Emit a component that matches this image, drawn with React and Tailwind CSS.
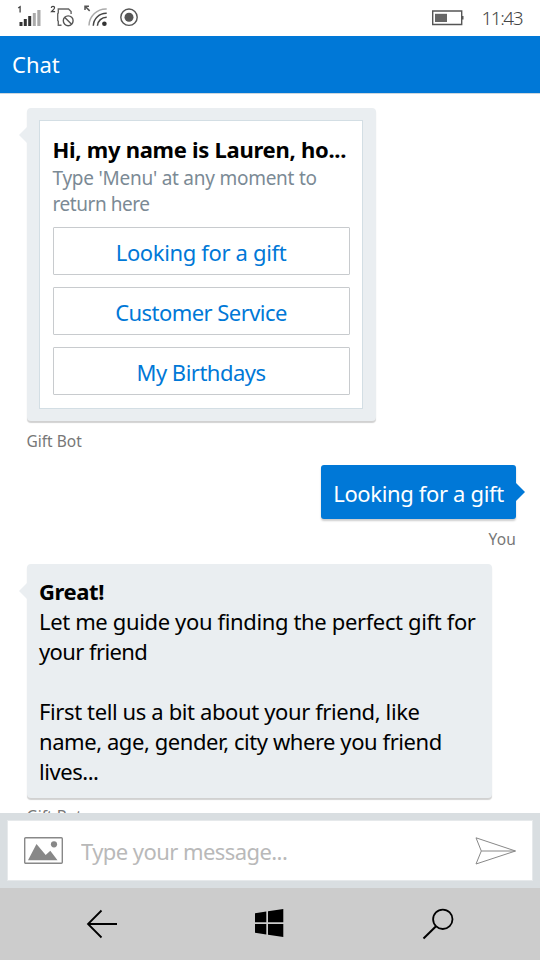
import React, { useState } from "react";

const menuOptions = [
  { label: "Looking for a gift", tracking: "tracking-[-0.35px]" },
  { label: "Customer Service", tracking: "tracking-[-0.55px]" },
  { label: "My Birthdays", tracking: "tracking-[-0.5px]" },
];

const guideLines = [
  { text: "Let me guide you finding the perfect gift for", tracking: "tracking-[-0.36px]" },
  { text: "your friend", tracking: "tracking-[-0.6px]" },
  { text: "", tracking: "" },
  { text: "First tell us a bit about your friend, like", tracking: "tracking-[-0.38px]" },
  { text: "name, age, gender, city where you friend", tracking: "tracking-[-0.43px]" },
  { text: "lives...", tracking: "tracking-[-0.45px]" },
];

function StatusBar() {
  return (
    <div className="flex h-9 shrink-0 items-start justify-between bg-white pr-[18px]">
      <svg width="150" height="36" viewBox="0 0 150 36" fill="none">
        {/* SIM 1 signal */}
        <path d="M18.2 8 20.1 6.7V12.4" stroke="#444" strokeWidth="1.3" />
        <path d="M19.5 22h3v4h-3zM23.8 19h3v7h-3zM28.2 16h3v10h-3z" fill="#333" />
        <path d="M32.8 13h3v13h-3zM37.3 10h3.2v16h-3.2z" fill="#aaa" />
        {/* SIM 2 missing */}
        <path d="M51.3 7.9c.2-2.2 3.5-2 3.2.1-.2 1.4-2 2.5-3 3.7h3.6" stroke="#444" strokeWidth="1.2" />
        <path d="M61.5 25.3h-3.2v-4l-.6-.8v-6.8l.6-.8V9h10.2l2.6 2.6V14" stroke="#666" strokeWidth="1.4" />
        <circle cx="68.2" cy="20.8" r="4.9" stroke="#555" strokeWidth="1.4" />
        <path d="m64.8 17.4 6.8 6.8" stroke="#555" strokeWidth="1.4" />
        {/* Wi-Fi */}
        <path d="M85 10V6.2h4M85.3 6.5l4.4 4.4" stroke="#555" strokeWidth="1.5" />
        <path d="M89 25.5A17 17 0 0 1 106.7 9" stroke="#aaa" strokeWidth="1.5" />
        <path d="M93.3 25.8A13 13 0 0 1 106.7 13.2" stroke="#444" strokeWidth="1.5" />
        <path d="M97.4 25.8a9.2 9.2 0 0 1 9.3-8.6" stroke="#444" strokeWidth="1.5" />
        <circle cx="104.4" cy="23.8" r="2.3" fill="#333" />
        {/* Location */}
        <circle cx="129" cy="17.2" r="8.2" stroke="#555" strokeWidth="1.4" />
        <circle cx="129" cy="17.2" r="4.5" fill="#555" />
      </svg>
      <div className="flex h-9 items-center gap-[17px]">
        <svg width="32" height="16" viewBox="0 0 32 16" fill="none">
          <path d="M.7 1h29v13.5H.7z" stroke="#555" strokeWidth="1.4" />
          <path d="M3 3.8h12V12H3z" fill="#666" />
          <path d="M30 6h1.5v3.5H30z" fill="#555" />
        </svg>
        <span className="text-[19px] leading-9 font-light tracking-[-1.5px] text-[#444]">11:43</span>
      </div>
    </div>
  );
}

function BotBubble({ className, children }) {
  return (
    <div className={`relative rounded bg-[#eaeef1] shadow-[0_2px_1px_rgba(0,0,0,0.18)] ${className}`}>
      {/* Tail */}
      <svg className="absolute top-[19px] -left-2" width="8" height="16" viewBox="0 0 8 16">
        <path d="M8 0 0 8l8 8z" fill="#eaeef1" />
      </svg>
      {children}
    </div>
  );
}

function MenuCard({ onSelect }) {
  return (
    <div className="flex h-[289px] flex-col border-[1.5px] border-[#d3dee4] bg-white px-[12.5px] pt-[13px]">
      <h2 className="text-[22px] leading-[30px] font-bold tracking-[-0.28px] whitespace-nowrap text-black">
        Hi, my name is Lauren, ho...
      </h2>
      <p className="mt-px text-[19px] leading-[26px] tracking-[-0.25px] whitespace-nowrap text-[#7b8a95]">
        Type 'Menu' at any moment to
        <br />
        <span className="tracking-[-0.45px]">return here</span>
      </p>
      <div className="mt-[10px] flex flex-col gap-3">
        {menuOptions.map((o) => (
          <button
            key={o.label}
            onClick={() => onSelect(o.label)}
            className={`h-12 rounded-[1px] border-[1.5px] border-[#c8cbce] pt-0.5 text-[22px] leading-[30px] text-[#0078d7] ${o.tracking}`}
          >
            {o.label}
          </button>
        ))}
      </div>
    </div>
  );
}

function MessageInput() {
  const [text, setText] = useState("");

  return (
    <div className="h-[75px] shrink-0 bg-[#d9dee1] px-[7px] pt-[7px] pb-[7px]">
      <div className="flex h-[61px] items-center border border-[#e6e9eb] bg-white pr-[15px] pl-4">
        <svg className="shrink-0" width="39" height="27" viewBox="0 0 39 27">
          <rect x=".7" y=".7" width="37.6" height="25.6" rx="1" fill="none" stroke="#888" strokeWidth="1.4" />
          <path d="M4 23.3 12.5 7l9.2 11 4.6-4.3 7.2 9.6z" fill="#888" />
          <circle cx="30" cy="7.3" r="3.1" fill="#888" />
        </svg>
        <input
          value={text}
          onChange={(e) => setText(e.target.value)}
          placeholder="Type your message..."
          className="ml-[18px] h-10 min-w-0 flex-1 text-[22px] tracking-[-0.57px] text-black outline-none placeholder:text-[#b9b9b9]"
        />
        <svg className="shrink-0" width="42" height="28" viewBox="0 0 42 28" fill="none" stroke="#888" strokeWidth="1">
          <path d="M1 .8 40.5 14 1 27l5.3-13zM6.3 14h34" />
        </svg>
      </div>
    </div>
  );
}

function NavBar() {
  return (
    <div className="flex h-[72px] shrink-0 items-center justify-between bg-[#ccc] pr-[86px] pl-[86px]">
      <svg width="32" height="30" viewBox="0 0 32 30" fill="none" stroke="#000" strokeWidth="1.8">
        <path d="M31 15H2M15.5 1.5 2 15l13.5 13.5" />
      </svg>
      <svg className="mr-0.5 mb-0.5" width="30" height="30" viewBox="0 0 30 30" fill="#000">
        <path d="M1 5.2 12.3 3.5v10.7H1zM14 3.2 29.3 1v13.2H14zM1 16h11.3v10.5L1 24.8zM14 16h15.3v13L14 26.8z" />
      </svg>
      <svg width="32" height="32" viewBox="0 0 32 32" fill="none" stroke="#000" strokeWidth="1.8">
        <circle cx="20.8" cy="11.3" r="9.7" />
        <path d="M14 18.2 1.5 30.5" strokeWidth="2" />
      </svg>
    </div>
  );
}

export default function App() {
  const [choice, setChoice] = useState("Looking for a gift");

  return (
    <div className="flex h-[960px] w-[540px] flex-col overflow-hidden bg-white font-['Noto_Sans','Open_Sans',sans-serif]">
      <StatusBar />
      <header className="flex h-[58px] shrink-0 items-center border-b border-[#ccd6dd] bg-[#0078d7] pb-0.5 pl-3">
        <h1 className="text-[22px] leading-[30px] text-white">Chat</h1>
      </header>

      <main className="flex min-h-0 flex-1 flex-col overflow-hidden pt-[14px] pr-6 pl-[26.5px]">
        <BotBubble className="h-[313px] w-[349px] shrink-0 px-[12.5px] pt-3">
          <MenuCard onSelect={setChoice} />
        </BotBubble>
        <div className="mt-[10px] h-5 shrink-0 text-[15.5px] leading-5 text-[#777]">Gift Bot</div>

        {/* Own reply */}
        <div className="relative mt-[14px] flex h-[54px] w-[195px] shrink-0 items-center justify-center self-end rounded-[3px] bg-[#0078d7] pt-0.5 text-[22px] leading-[30px] tracking-[-0.35px] whitespace-nowrap text-white shadow-[0_2px_2px_rgba(0,0,0,0.2)]">
          {choice}
          <svg className="absolute top-[18px] -right-[9px]" width="9" height="18" viewBox="0 0 9 18">
            <path d="M0 0 9 9 0 18z" fill="#0078d7" />
          </svg>
        </div>
        <div className="mt-[10px] h-5 shrink-0 self-end text-[15.5px] leading-5 tracking-[0.2px] text-[#777]">You</div>

        <BotBubble className="mt-[15px] h-[234px] w-[465px] shrink-0 px-[12.5px] pt-3 text-[22px] leading-[30px] text-black">
          <p className="font-bold tracking-[-0.4px]">Great!</p>
          {guideLines.map((line, i) => (
            <p key={i} className={`h-[30px] whitespace-nowrap ${line.tracking}`}>{line.text}</p>
          ))}
        </BotBubble>
        <div className="mt-2 h-5 shrink-0 text-[15.5px] leading-5 text-[#777]">Gift Bot</div>
      </main>

      <MessageInput />
      <NavBar />
    </div>
  );
}
